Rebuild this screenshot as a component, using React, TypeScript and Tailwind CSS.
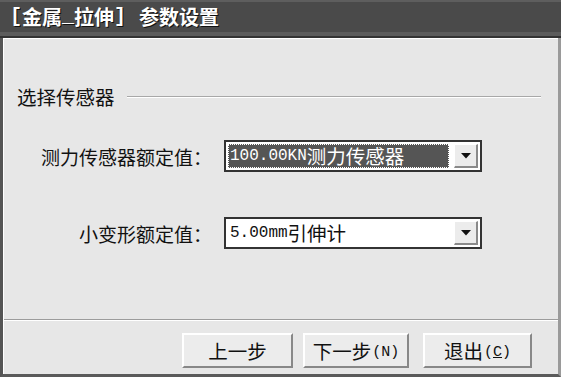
import React from "react";

const cjk = { fontFamily: '"Noto Sans CJK SC", "Noto Sans", sans-serif' };
const mono = { fontFamily: '"Liberation Mono", "Noto Sans CJK SC", monospace' };

function Arrow() {
  return (
    <div className="w-[24px] h-full flex items-center justify-center bg-[#ececec] border-t border-l border-t-white border-l-white border-b-2 border-r-2 border-b-[#8a8a8a] border-r-[#8a8a8a]">
      <svg width="10" height="6" viewBox="0 0 10 6">
        <polygon points="0,0 10,0 5,5.5" fill="#111" />
      </svg>
    </div>
  );
}

function Btn({ children, w }: { children: React.ReactNode; w: string }) {
  return (
    <div
      className={`${w} h-[35px] flex items-center justify-center bg-[#ececec] border-t-2 border-l-2 border-t-white border-l-white border-b-2 border-r-2 border-b-[#888] border-r-[#888] text-[19.5px] leading-none text-[#111]`}
      style={cjk}
    >
      {children}
    </div>
  );
}

export default function App() {
  return (
    <div className="w-[561px] h-[377px] flex flex-col bg-[#e7e7e7] overflow-hidden" style={cjk}>
      {/* title bar */}
      <div className="h-[38px] flex flex-col bg-[#4a4a4a]">
        <div className="h-[2px] bg-[#5e5e5e]" />
        <div className="flex-1 flex items-center pl-[10px] text-white font-bold text-[20px] leading-none [text-shadow:1px_1px_0_#111]">
          <span className="flex items-center">
            <span style={mono}>[</span>
            <span>金属</span>
            <span style={mono}>_</span>
            <span>拉伸</span>
            <span style={mono}>]</span>
          </span>
          <span className="ml-[13px]">参数设置</span>
        </div>
        <div className="h-[4px] bg-[#5c5c5c]" />
        <div className="h-[2px] bg-[#333]" />
      </div>
      {/* body */}
      <div className="flex-1 flex flex-col border-l-[3px] border-l-[#555] border-r-[3px] border-r-[#9a9a9a] border-b-[3px] border-b-[#5a5a5a]">
        <div className="flex-1 flex flex-col border-t border-l border-t-white border-l-white">
          {/* group header */}
          <div className="mt-[45px] h-[26px] flex items-center">
            <span className="pl-[13px] text-[19.5px] text-[#111] leading-none">选择传感器</span>
            <div className="flex-1 ml-[12px] mr-[17px] flex flex-col">
              <div className="h-px bg-[#a8a8a8]" />
              <div className="h-px bg-white" />
            </div>
          </div>
          {/* row 1 */}
          <div className="mt-[30px] flex items-center">
            <div className="w-[208px] text-right text-[19px] text-[#111] leading-none">测力传感器额定值：</div>
            <div className="ml-[12px] w-[258px] h-[32px] flex items-center bg-white border-2 border-[#333] p-[2px]">
              <div className="flex-1 h-full mr-[5px] flex items-center bg-[#555] outline-1 outline-dotted outline-white -outline-offset-1 text-white leading-none">
                <span className="text-[16px] pl-[2px]" style={mono}>100.00KN</span>
                <span className="text-[19.5px]">测力传感器</span>
              </div>
              <Arrow />
            </div>
          </div>
          {/* row 2 */}
          <div className="mt-[45px] flex items-center">
            <div className="w-[208px] text-right text-[19px] text-[#111] leading-none">小变形额定值：</div>
            <div className="ml-[12px] w-[258px] h-[32px] flex items-center bg-white border-2 border-[#333] p-[2px]">
              <div className="flex-1 h-full mr-[5px] flex items-center text-[#111] leading-none">
                <span className="text-[16px] pl-[2px]" style={mono}>5.00mm</span>
                <span className="text-[19.5px]">引伸计</span>
              </div>
              <Arrow />
            </div>
          </div>
          <div className="flex-1" />
          {/* separator */}
          <div className="h-px bg-[#9c9c9c]" />
          <div className="h-px bg-white" />
          {/* buttons */}
          <div className="mt-[12px] mb-[6px] flex justify-end pr-[26px]">
            <Btn w="w-[111px]">
              <span>上一步</span>
            </Btn>
            <div className="w-[10px]" />
            <Btn w="w-[106px]">
              <span>下一步</span>
              <span className="text-[15px] ml-[1px] translate-y-[2px]" style={mono}>(N)</span>
            </Btn>
            <div className="w-[14px]" />
            <Btn w="w-[109px]">
              <span>退出</span>
              <span className="text-[15px] ml-[1px] translate-y-[2px]" style={mono}>
                (<span className="underline">C</span>)
              </span>
            </Btn>
          </div>
        </div>
      </div>
    </div>
  );
}
